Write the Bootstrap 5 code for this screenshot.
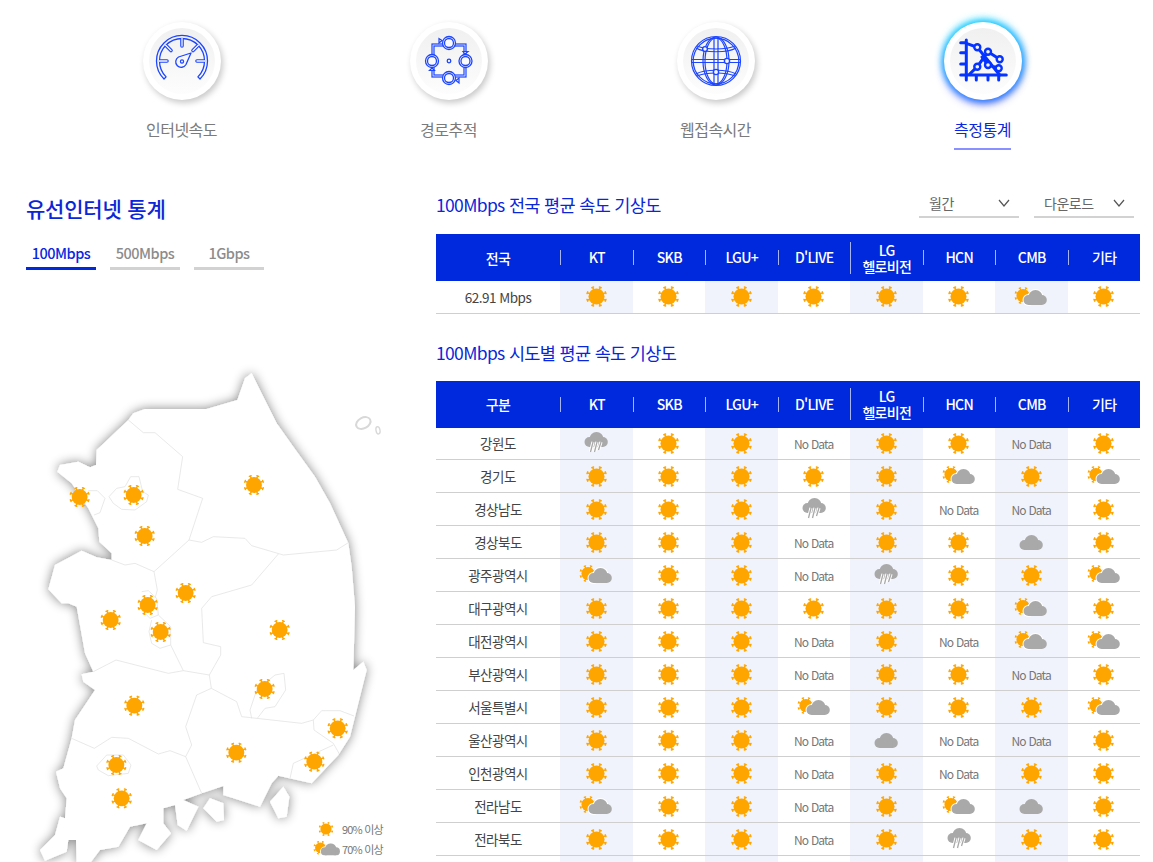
<!DOCTYPE html>
<html lang="ko">
<head>
    <meta charset="UTF-8">
    <meta name="viewport" content="width=device-width, initial-scale=1.0">
    <title>유선인터넷 통계</title>
    <link href="https://cdn.jsdelivr.net/npm/bootstrap@5.3.2/dist/css/bootstrap.min.css" rel="stylesheet">
    <style>
        body {
            font-family: "Noto Sans CJK KR", "Noto Sans", sans-serif;
            background-color: #fff;
            letter-spacing: -0.5px;
        }
        .top-menu {
            display: grid;
            grid-template-columns: repeat(4, 267px);
            margin-left: 48px;
            padding-top: 22px;
        }
        .menu-item { text-decoration: none; }
        .menu-circle {
            width: 78px;
            height: 78px;
            border-radius: 50%;
            background: #fff;
            box-shadow: 2px 3px 6px rgba(0,0,0,.22);
        }
        .menu-inner {
            width: 66px;
            height: 66px;
            border-radius: 50%;
            background: linear-gradient(#f0f0f0, #fdfdfd);
        }
        .menu-inner svg { flex: none; }
        .menu-item.active-item .menu-circle {
            box-shadow: 0 -3px 8px rgba(0,230,255,.75), 0 4px 9px rgba(30,50,255,.7), 3px 0 7px rgba(30,120,255,.6), -2px 0 6px rgba(0,180,255,.5);
        }
        .menu-label {
            margin-top: 18px;
            font-size: 16px;
            line-height: 22px;
            color: #7b7b7b;
            padding-bottom: 8px;
            border-bottom: 2px solid transparent;
        }
        .active-item .menu-label { color: #0a28e0; border-bottom-color: #8a90ff; }
        .stat-wrap { margin-top: 40px; }
        .stat-left { width: 436px; flex: none; }
        .stat-title {
            font-size: 21px;
            line-height: 37px;
            font-weight: 500;
            color: #0a26d8;
            padding-left: 26px;
            letter-spacing: -0.2px;
            margin: 0;
        }
        .speed-tabs { padding-left: 26px; margin-top: 13px; gap: 14px; }
        .speed-tab {
            width: 70px;
            text-align: center;
            font-size: 14.5px;
            line-height: 25px;
            padding-bottom: 2px;
            font-weight: 500;
            color: #8c8c8c;
            border-bottom: 3px solid #d2d2d2;
        }
        .speed-tab.on { color: #0a28e0; border-bottom-color: #0028dc; }
        .map-box { position: relative; width: 400px; height: 502px; margin-top: 90px; }
        .map-box > svg { display: block; overflow: hidden; }
        .map-legend {
            position: absolute;
            left: 313px;
            top: 459px;
            font-size: 11px;
            line-height: 20px;
            color: #777;
            letter-spacing: -0.8px;
        }
        .map-legend svg { width: 28px; height: 18px; margin-right: 1px; }
        .stat-right { width: 704px; flex: none; }
        .sub-title {
            font-size: 17.5px;
            line-height: 28px;
            font-weight: 400;
            color: #0a26d8;
            letter-spacing: -0.65px;
            margin: 1px 0 0;
        }
        .sub-title.second-title { margin-top: 25px; }
        .pick-box {
            width: 100px;
            height: 28px;
            padding: 0 8px 0 10px;
            font-size: 14px;
            color: #666;
            border-bottom: 2px solid #d2d2d2;
            line-height: 27px;
        }
        .pick-row { gap: 15px; margin-right: 6px; }
        .wx-table { table-layout: fixed; margin: 0; }
        .table-first { margin-top: 15px; }
        .table-second { margin-top: 14px; }
        .col-name { width: 124px; }
        .col-isp { width: 72.5px; }
        .wx-table.table > :not(caption) > * > * {
            padding: 0;
            vertical-align: middle;
            text-align: center;
            border-bottom: 1px solid #cfcfcf;
            height: 33px;
            color: #444;
            font-size: 13.5px;
            font-weight: 400;
        }
        .wx-table.table > tbody > tr:first-child > td { height: 32px; }
        .wx-table.table > thead > tr > th {
            --bs-table-bg: #0028dc;
            color: #fff;
            height: 47px;
            font-size: 14px;
            font-weight: 500;
            line-height: 16px;
            letter-spacing: -0.7px;
            border-bottom: 0;
        }
        .wx-table.table > tbody > tr > td.col-tint { --bs-table-bg: #f0f3fc; }
        .head-cell { border-left: 1px solid rgba(255,255,255,.65); line-height: 15px; }
        .head-cell.two-line { line-height: 16px; }
        .no-data { font-size: 12px; color: #777; letter-spacing: -0.8px; }
        .wx-ico { display: block; margin: 0 auto; }
    </style>
</head>
<body>
<svg width="0" height="0" class="position-absolute">
    <defs>
        <symbol id="sun" viewBox="-12 -12 24 24">
            <g stroke="#ffa500" stroke-width="1.500" fill="none" stroke-linecap="round">
                <path d="M0 -7V-10.300M-1 -10.300H1" transform="rotate(22.5)"/>
                <path d="M0 -7V-10.300M-1 -10.300H1" transform="rotate(67.5)"/>
                <path d="M0 -7V-10.300M-1 -10.300H1" transform="rotate(112.5)"/>
                <path d="M0 -7V-10.300M-1 -10.300H1" transform="rotate(157.5)"/>
                <path d="M0 -7V-10.300M-1 -10.300H1" transform="rotate(202.5)"/>
                <path d="M0 -7V-10.300M-1 -10.300H1" transform="rotate(247.5)"/>
                <path d="M0 -7V-10.300M-1 -10.300H1" transform="rotate(292.5)"/>
                <path d="M0 -7V-10.300M-1 -10.300H1" transform="rotate(337.5)"/>
            </g>
            <circle r="8.400" fill="#ffa500"/>
        </symbol>
        <symbol id="cloudshape" viewBox="0 0 24 15">
            <g fill="#a9a9a9">
                <circle cx="5.500" cy="10" r="5"/>
                <circle cx="12.500" cy="7" r="7"/>
                <circle cx="18.800" cy="10" r="5"/>
                <rect x="5.500" y="8" width="13.300" height="7"/>
            </g>
        </symbol>
        <symbol id="suncloud" viewBox="0 0 34 22">
            <g transform="translate(9 9.5) scale(.78)">
                <use href="#sun" x="-12" y="-12" width="24" height="24"/>
            </g>
            <circle cx="14.500" cy="14" r="6" fill="#fff"/>
            <circle cx="21.500" cy="11" r="8" fill="#fff"/>
            <use href="#cloudshape" x="9" y="4" width="24" height="15"/>
        </symbol>
        <symbol id="raincloud" viewBox="0 0 24 22">
            <use href="#cloudshape" x="0" y="0" width="24" height="15"/>
            <g stroke="#fff" stroke-width="3.2">
                <path d="M9 10L6.500 20M13 10L10.500 20M17 10L14.500 18"/>
            </g>
            <g stroke="#a9a9a9" stroke-width="1.300">
                <path d="M9 10L6.500 20M13 10L10.500 20M17 10L14.500 18"/>
            </g>
        </symbol>
    </defs>
</svg>

<!-- 상단 메뉴 -->
<div class="top-menu">
    <a href="#" class="menu-item d-flex flex-column align-items-center">
        <div class="menu-circle d-flex align-items-center justify-content-center">
            <div class="menu-inner d-flex align-items-center justify-content-center">
                <svg width="56" height="56" viewBox="0 0 56 56" fill="none" stroke="#1c45ff" stroke-width="1.300">
                    <path d="M10 46A25.500 25.500 0 1 1 46 46L43.900 43.900A22.500 22.500 0 1 0 12.100 43.900Z" stroke-linejoin="round"/>
                    <g stroke="#1c45ff" stroke-width="3.600" stroke-linecap="round">
                        <path d="M28 6.500V13M12.500 13L17 17.500M43.500 13L39 17.500M6.500 28H13M43 28H49.500"/>
                    </g>
                    <g stroke="#fafafa" stroke-width="1.300" stroke-linecap="round">
                        <path d="M28 5V13M11.500 12L17 17.500M44.500 12L39 17.500M5 28H13M43 28H51"/>
                    </g>
                    <path d="M37 20L32 31.500A5.500 5.500 0 1 1 24.500 24Z" stroke-width="1.300" stroke-linejoin="round"/>
                    <circle cx="28" cy="28.500" r="1.600" stroke-width="1.200"/>
                </svg>
            </div>
        </div>
        <div class="menu-label">인터넷속도</div>
    </a>
    <a href="#" class="menu-item d-flex flex-column align-items-center">
        <div class="menu-circle d-flex align-items-center justify-content-center">
            <div class="menu-inner d-flex align-items-center justify-content-center">
                <svg width="56" height="56" viewBox="0 0 56 56" fill="none" stroke="#1c45ff" stroke-width="1.200">
                    <rect x="11" y="11" width="34" height="33"/>
                    <rect x="13" y="13" width="30" height="29"/>
                    <g fill="#fafafa" stroke-width="1.300">
                        <circle cx="28" cy="10" r="6.500"/>
                        <circle cx="28" cy="10" r="4.500"/>
                        <circle cx="44.500" cy="28" r="6.500"/>
                        <circle cx="44.500" cy="28" r="4.500"/>
                        <circle cx="28" cy="45" r="6.500"/>
                        <circle cx="28" cy="45" r="4.500"/>
                        <circle cx="11" cy="28" r="6.500"/>
                        <circle cx="11" cy="28" r="4.500"/>
                    </g>
                    <path d="M21 7.500L18 5.500V10ZM44 21L47 18.500H42ZM35 47.500L38 50V45ZM11 35L8.500 37.500H13.500Z" fill="#fafafa"/>
                    <circle cx="28" cy="28" r="1.800" stroke-width="1.300"/>
                </svg>
            </div>
        </div>
        <div class="menu-label">경로추적</div>
    </a>
    <a href="#" class="menu-item d-flex flex-column align-items-center">
        <div class="menu-circle d-flex align-items-center justify-content-center">
            <div class="menu-inner d-flex align-items-center justify-content-center">
                <svg width="56" height="56" viewBox="0 0 56 56" fill="none" stroke="#1c45ff" stroke-width="1.200">
                    <circle cx="28" cy="28" r="24.500"/>
                    <circle cx="28" cy="28" r="22.800"/>
                    <ellipse cx="28" cy="28" rx="13" ry="24"/>
                    <ellipse cx="28" cy="28" rx="11" ry="23"/>
                    <path d="M26 4V52M30 4V52M4 26.500H52M4 29.500H52M8 15C16 20 40 20 48 15M9 13C18 17 38 17 47 13M8 41C16 36 40 36 48 41M9 43C18 39 38 39 47 43"/>
                    <g fill="#fafafa" stroke-width="1.400">
                        <circle cx="17" cy="16" r="2.400"/>
                        <circle cx="39" cy="28" r="2.600"/>
                        <circle cx="28" cy="39" r="2.600"/>
                    </g>
                </svg>
            </div>
        </div>
        <div class="menu-label">웹접속시간</div>
    </a>
    <a href="#" class="menu-item active-item d-flex flex-column align-items-center">
        <div class="menu-circle d-flex align-items-center justify-content-center">
            <div class="menu-inner d-flex align-items-center justify-content-center">
                <svg width="56" height="56" viewBox="0 0 56 56" fill="none" stroke="#0533ff" stroke-width="3" stroke-linecap="round">
                    <path d="M11.300 7V47M5.700 9.700H11.300M5.700 19.700H11.300M5.700 31H11.300M5.700 42H51.300M21.300 42V47M33 42V47M43.700 42V47"/>
                    <path d="M11.300 10.300L22.300 14.300L44.700 42M14.700 41L22.300 33.700L33 18.700L44.700 26.300M33 32L43.700 35.300M27 24L33 32"/>
                    <g fill="#f6f6f6" stroke-width="2.400">
                        <circle cx="22.300" cy="14.300" r="3"/>
                        <circle cx="33" cy="18.700" r="3"/>
                        <circle cx="44.700" cy="26.300" r="3"/>
                        <circle cx="33" cy="32" r="3"/>
                        <circle cx="43.700" cy="35.300" r="3"/>
                        <circle cx="22.300" cy="33.700" r="3"/>
                    </g>
                </svg>
            </div>
        </div>
        <div class="menu-label">측정통계</div>
    </a>
</div>

<div class="stat-wrap d-flex">
    <!-- 왼쪽 지도 -->
    <div class="stat-left">
        <h2 class="stat-title">유선인터넷 통계</h2>
        <div class="speed-tabs d-flex">
            <div class="speed-tab on">100Mbps</div>
            <div class="speed-tab">500Mbps</div>
            <div class="speed-tab">1Gbps</div>
        </div>
        <div class="map-box">
            <svg width="400" height="502" viewBox="0 0 1200 1506" id="mapSvg">
                <defs>
                    <filter id="mapShadow" x="-10%" y="-10%" width="120%" height="120%">
                        <feDropShadow dx="0" dy="0" stdDeviation="16" flood-color="#000" flood-opacity=".48"/>
                    </filter>
                </defs>
                <g fill="#fff" filter="url(#mapShadow)">
                    <path d="M755 40L790 110L830 190L880 260L945 350L990 430L1045 550L1055 620L1065 740L1060 930L1090 905L1100 930L1075 1030L1050 1130L1015 1185L935 1270L835 1247L815 1270L780 1340L670 1305L670 1278L605 1300L550 1320L595 1340L560 1412L533 1395L525 1335L490 1345L490 1390L513 1420L470 1470L415 1440L440 1390L390 1400L355 1460L300 1470L270 1510L230 1510L228 1440L205 1440L200 1475L135 1502L120 1470L165 1425L180 1370L195 1375L200 1315L180 1285L168 1235L190 1225L215 1135L225 1080L285 990L250 965L245 943L280 935L255 880L230 740L205 730L185 730L145 688L165 615L245 572L290 592L335 600L335 580L298 545L295 505L265 445L215 370L172 335L180 315L235 305L270 322L288 315L290 270L385 180L400 160L435 147L620 147L712 120L735 55Z"/>
                    <path d="M810 1325L850 1280L868 1310L860 1370L835 1375Z"/>
                    <path d="M610 1345L630 1315L670 1330L672 1380L650 1385Z"/>
                </g>
                <g fill="#fff" stroke="#d8d8d8" stroke-width="6">
                    <ellipse cx="1090" cy="189" rx="23" ry="16" transform="rotate(-28 1090 189)"/>
                    <ellipse cx="1134" cy="211" rx="6" ry="11" transform="rotate(-12 1134 211)" stroke-width="4"/>
                </g>
                <g fill="none" stroke="#dedede" stroke-width="2">
                    <path d="M385 180L430 218L465 218L548 290L533 388L608 415L567 540L605 547L640 530L735 535L755 557L850 585L1010 570L1045 548"/>
                    <path d="M335 600L375 615L405 610L462 635L567 540"/>
                    <path d="M462 635L472 690L465 715"/>
                    <path d="M425 695L445 692L470 715L475 765L450 775L425 750"/>
                    <path d="M475 765L512 800L512 855L480 865L455 850L447 815L455 780"/>
                    <path d="M512 855L550 932L628 945"/>
                    <path d="M280 935L348 900L505 940L550 932"/>
                    <path d="M835 582L755 675L635 710L605 745L610 848L662 860L662 885L628 945L634 985L710 1025L725 1070L905 1090L940 1080L965 1052L1020 1052L1062 1068"/>
                    <path d="M940 1080L942 1110L1000 1150L1018 1182"/>
                    <path d="M1000 1155L880 1210L870 1255"/>
                    <path d="M755 1075L750 1050L770 990L825 945L852 940L857 990L825 1040L795 1045L772 1075"/>
                    <path d="M634 985L590 1005L557 1100L575 1155L557 1190L605 1300"/>
                    <path d="M215 1135L283 1165L335 1132L385 1135L475 1182L510 1172L557 1190"/>
                    <path d="M290 1218L320 1185L370 1185L393 1215L385 1240L325 1247L295 1230Z"/>
                    <path d="M327 410L350 385L375 380L392 350L417 350L428 395L445 405L440 425L405 450L365 448L340 430Z"/>
                    <path d="M265 392L292 392L315 415L300 458L282 465"/>
                </g>
                <g id="mapSuns"></g>
            </svg>
            <div class="map-legend">
                <div class="d-flex align-items-center"><svg><use href="#sun" x="5" y="1" width="16" height="16"/></svg>90% 이상</div>
                <div class="d-flex align-items-center"><svg viewBox="0 0 34 22"><use href="#suncloud" width="34" height="22"/></svg>70% 이상</div>
            </div>
        </div>
    </div>

    <!-- 오른쪽 표 -->
    <div class="stat-right">
        <div class="d-flex justify-content-between align-items-start">
            <h3 class="sub-title">100Mbps 전국 평균 속도 기상도</h3>
            <div class="pick-row d-flex">
                <div class="pick-box d-flex justify-content-between">월간
                    <svg width="14" height="24" viewBox="0 0 14 24" fill="none" stroke="#555" stroke-width="1.200"><path d="M2 10L7 16L12 10"/></svg>
                </div>
                <div class="pick-box d-flex justify-content-between">다운로드
                    <svg width="14" height="24" viewBox="0 0 14 24" fill="none" stroke="#555" stroke-width="1.200"><path d="M2 10L7 16L12 10"/></svg>
                </div>
            </div>
        </div>
        <table class="table wx-table table-first" id="tblAll"></table>
        <h3 class="sub-title second-title">100Mbps 시도별 평균 속도 기상도</h3>
        <table class="table wx-table table-second" id="tblArea"></table>
    </div>
</div>

<script src="https://cdn.jsdelivr.net/npm/bootstrap@5.3.2/dist/js/bootstrap.bundle.min.js"></script>
<script>
const COLS = ['KT', 'SKB', 'LGU+', "D'LIVE", 'LG<br>헬로비전', 'HCN', 'CMB', '기타'];

// s 맑음, g 구름조금, k 흐림, r 비, n 데이터 없음
const AREA = [
    ['강원도', 'rssnssns'],
    ['경기도', 'sssssgsg'],
    ['경상남도', 'sssrsnns'],
    ['경상북도', 'sssnssks'],
    ['광주광역시', 'gssnrssg'],
    ['대구광역시', 'ssssssgs'],
    ['대전광역시', 'sssnsngg'],
    ['부산광역시', 'sssnssns'],
    ['서울특별시', 'sssgsssg'],
    ['울산광역시', 'sssnknns'],
    ['인천광역시', 'sssnsnss'],
    ['전라남도', 'gssnsgks'],
    ['전라북도', 'sssnsrss'],
    ['', 'sss-ssss']
];

function cellHtml(code) {
    if (code === 's') return '<svg class="wx-ico" width="23" height="23"><use href="#sun" width="23" height="23"/></svg>';
    if (code === 'g') return '<svg class="wx-ico" width="34" height="22"><use href="#suncloud" width="34" height="22"/></svg>';
    if (code === 'k') return '<svg class="wx-ico" width="24" height="15"><use href="#cloudshape" width="24" height="15"/></svg>';
    if (code === 'r') return '<svg class="wx-ico" width="24" height="22"><use href="#raincloud" width="24" height="22"/></svg>';
    if (code === '-') return '';
    return '<span class="no-data">No Data</span>';
}

function makeTable(id, firstHead, rows) {
    let html = '<colgroup><col class="col-name">' + COLS.map(() => '<col class="col-isp">').join('') + '</colgroup>';
    html += '<thead><tr><th>' + firstHead + '</th>';
    COLS.forEach(c => {
        html += '<th><div class="head-cell' + (c.includes('<br>') ? ' two-line' : '') + '">' + c + '</div></th>';
    });
    html += '</tr></thead><tbody>';
    rows.forEach(r => {
        html += '<tr><td>' + r[0] + '</td>';
        r[1].split('').forEach((code, i) => {
            html += '<td class="' + (i % 2 === 0 ? 'col-tint' : '') + '">' + cellHtml(code) + '</td>';
        });
        html += '</tr>';
    });
    document.getElementById(id).innerHTML = html + '</tbody>';
}

makeTable('tblAll', '전국', [['62.91 Mbps', 'ssssssgs']]);
makeTable('tblArea', '구분', AREA);

// 지도 위 날씨 아이콘
const SUNS = [[239,411],[401,405],[762,375],[434,528],[557,699],[443,735],[332,780],[482,816],[839,810],[794,987],[403,1037],[1013,1105],[709,1178],[943,1205],[349,1215],[365,1315]];
const NS = 'http://www.w3.org/2000/svg';
SUNS.forEach(p => {
    const u = document.createElementNS(NS, 'use');
    u.setAttribute('href', '#sun');
    u.setAttribute('x', p[0] - 34);
    u.setAttribute('y', p[1] - 34);
    u.setAttribute('width', 68);
    u.setAttribute('height', 68);
    document.getElementById('mapSuns').appendChild(u);
});
</script>
</body>
</html>
